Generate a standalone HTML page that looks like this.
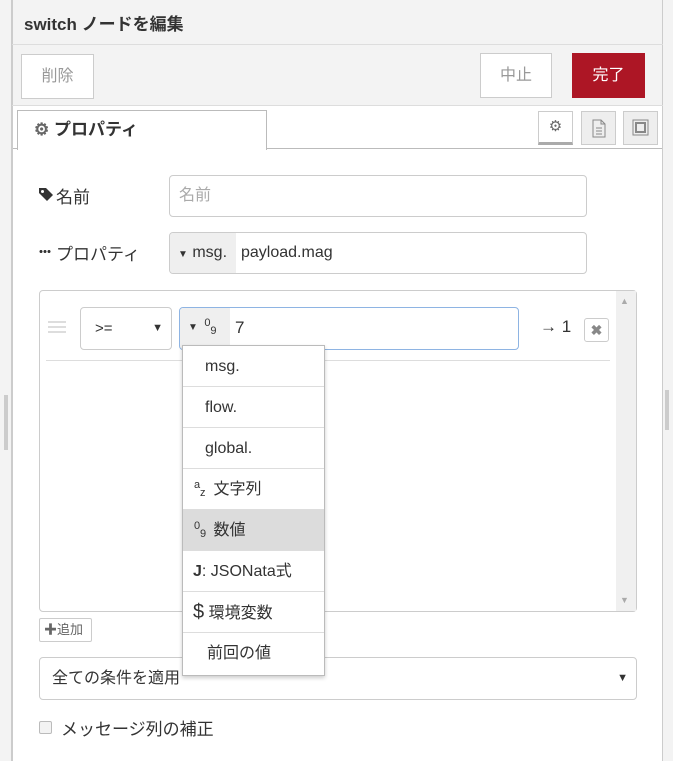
<!DOCTYPE html>
<html><head><meta charset="utf-8"><style>
*{box-sizing:border-box}
body{margin:0;width:673px;height:761px;overflow:hidden;background:#f3f3f3;font-family:"Liberation Sans","Noto Sans CJK JP",sans-serif;font-size:15px;color:#333;position:relative}
.abs{position:absolute}
.panel{left:12px;top:0;width:651px;height:761px;background:#fff;border-left:1px solid #ccc;border-right:1px solid #ccc}
.btn{position:absolute;border:1px solid #ccc;background:#fff;color:#999;font-size:16px;text-align:center}
.inp{position:absolute;border:1px solid #ccc;border-radius:4px;background:#fff}
.menu>div{height:41px;line-height:41px;border-bottom:1px solid #ddd;padding-left:22px;font-size:16px;color:#333;overflow:hidden;position:relative}
.sp{display:inline-block;position:relative;width:16px;height:20px;vertical-align:middle;font-size:11px;line-height:11px}
.sp i{font-style:normal;position:absolute}
</style></head><body>
<div class="abs" style="left:0;top:0;width:12px;height:761px;background:#f3f3f3;border-right:1px solid #ccc"></div>
<div class="abs" style="left:4px;top:395px;width:4px;height:55px;background:#ccc"></div>
<div class="abs" style="left:665px;top:390px;width:4px;height:40px;background:#ccc"></div>
<div class="abs panel"></div>
<div class="abs" style="left:12px;top:0;width:651px;height:105px;background:#f3f3f3;border-left:1px solid #ccc;border-right:1px solid #ccc"></div>
<div class="abs" style="left:12px;top:44px;width:651px;height:1px;background:#ddd"></div>
<div class="abs" style="left:12px;top:105px;width:651px;height:1px;background:#ddd"></div>
<div class="abs" style="left:24px;top:10px;font-size:17px;font-weight:bold;color:#333">switch ノードを編集</div>
<div class="btn" style="left:21px;top:54px;width:73px;height:45px;line-height:43px">削除</div>
<div class="btn" style="left:480px;top:53px;width:72px;height:45px;line-height:43px">中止</div>
<div class="btn" style="left:572px;top:53px;width:73px;height:45px;line-height:43px;background:#ad1625;border-color:#ad1625;color:#fff">完了</div>
<div class="abs" style="left:13px;top:148px;width:649px;height:1px;background:#bbb"></div>
<div class="abs" style="left:17px;top:110px;width:250px;height:40px;background:#fff;border:1px solid #bbb;border-bottom:none;font-weight:bold;font-size:17px;line-height:38px;padding-left:16px;color:#333"><span style="color:#666">⚙</span> プロパティ</div>
<div class="abs" style="left:538px;top:111px;width:35px;height:34px;border:1px solid #ccc;background:#fff;border-bottom:3px solid #aaa;text-align:center;line-height:30px;color:#666">⚙</div>
<div class="abs" style="left:581px;top:111px;width:35px;height:34px;border:1px solid #ccc;background:#eee"><svg width="33" height="32"><path d="M11 8h8l4 4v13H11z M19 8v4h4 M14 16h6 M14 19h6 M14 22h6" fill="none" stroke="#888"/></svg></div>
<div class="abs" style="left:623px;top:111px;width:35px;height:34px;border:1px solid #ccc;background:#eee"><svg width="33" height="32"><rect x="9" y="8" width="15" height="15" fill="none" stroke="#888"/><rect x="12" y="11" width="9" height="9" fill="none" stroke="#888" stroke-width="2"/></svg></div>
<svg class="abs" style="left:38px;top:186px" width="16" height="16"><path d="M1 2h7l7 7-6 6-8-8z" fill="#333"/><circle cx="4.5" cy="5.5" r="1.5" fill="#fff"/></svg>
<div class="abs" style="left:56px;top:183px;font-size:17px">名前</div>
<div class="inp" style="left:169px;top:175px;width:418px;height:42px;line-height:40px;padding-left:9px;color:#aaa;font-size:16px">名前</div>
<div class="abs" style="left:39px;top:250px;width:12px;height:3px;background:radial-gradient(circle,#333 1.4px,transparent 1.6px) 0 0/4px 3px"></div>
<div class="abs" style="left:56px;top:240px;font-size:17px">プロパティ</div>
<div class="inp" style="left:169px;top:232px;width:418px;height:42px;overflow:hidden"><div style="position:absolute;left:0;top:0;width:66px;height:42px;background:#efefef;line-height:40px;padding-left:8px;font-size:16px"><span style="font-size:10px">▼</span> msg.</div><div style="position:absolute;left:71px;line-height:40px;font-size:16px">payload.mag</div></div>
<div class="abs" style="left:39px;top:290px;width:598px;height:322px;border:1px solid #ccc;border-radius:4px"></div>
<div class="abs" style="left:616px;top:291px;width:20px;height:320px;background:#f0f0f0"></div>
<div class="abs" style="left:620px;top:296px;color:#aaa;font-size:9px">▲</div>
<div class="abs" style="left:620px;top:595px;color:#aaa;font-size:9px">▼</div>
<div class="abs" style="left:46px;top:360px;width:564px;height:1px;background:#ddd"></div>
<div class="abs" style="left:48px;top:321px;width:18px;height:2px;background:#ddd;box-shadow:0 5px 0 #ddd,0 10px 0 #ddd"></div>
<div class="inp" style="left:80px;top:307px;width:92px;height:43px;line-height:41px;padding-left:14px;font-size:15px">&gt;=<span style="position:absolute;right:8px;font-size:11px">▼</span></div>
<div class="inp" style="left:179px;top:307px;width:340px;height:43px;border-color:#8eb4e3;overflow:hidden"><div style="position:absolute;left:0;top:0;width:50px;height:43px;background:#efefef;line-height:40px;padding-left:8px;font-size:16px"><span style="font-size:10px;vertical-align:middle">▼</span> <span class="sp"><i style="left:2px;top:0">0</i><i style="left:8px;top:8px">9</i></span></div><div style="position:absolute;left:55px;line-height:40px;font-size:17px">7</div></div>
<div class="abs" style="left:540px;top:317px;font-size:17px;color:#333">→ 1</div>
<div class="abs" style="left:584px;top:318px;width:25px;height:24px;border:1px solid #ccc;border-radius:3px;text-align:center;line-height:22px;color:#888;font-weight:bold;font-size:14px">✖</div>
<div class="abs" style="left:39px;top:618px;width:53px;height:24px;border:1px solid #ccc;border-radius:2px;font-size:13px;line-height:22px;padding-left:4px;color:#666">✚追加</div>
<div class="inp" style="left:39px;top:657px;width:598px;height:43px;line-height:41px;padding-left:12px;font-size:16px">全ての条件を適用<span style="position:absolute;right:8px;font-size:11px">▼</span></div>
<div class="abs" style="left:39px;top:721px;width:13px;height:13px;border:1px solid #bbb;border-radius:2px;background:#f3f3f3"></div>
<div class="abs" style="left:61px;top:715px;font-size:17px">メッセージ列の補正</div>
<div class="abs menu" style="left:182px;top:345px;width:143px;height:331px;background:#fff;border:1px solid #bbb;box-shadow:0 2px 4px rgba(0,0,0,.2)">
<div>msg.</div><div>flow.</div><div>global.</div>
<div style="padding-left:10px"><span class="sp"><i style="left:1px;top:0">a</i><i style="left:7px;top:8px">z</i></span> 文字列</div>
<div style="padding-left:10px;background:#dcdcdc"><span class="sp"><i style="left:1px;top:0">0</i><i style="left:7px;top:8px">9</i></span> 数値</div>
<div style="padding-left:10px"><b>J</b>: JSONata式</div>
<div style="padding-left:10px"><span style="font-size:20px">$</span> 環境変数</div>
<div style="border:none;padding-left:24px">前回の値</div>
</div>
</body></html>
